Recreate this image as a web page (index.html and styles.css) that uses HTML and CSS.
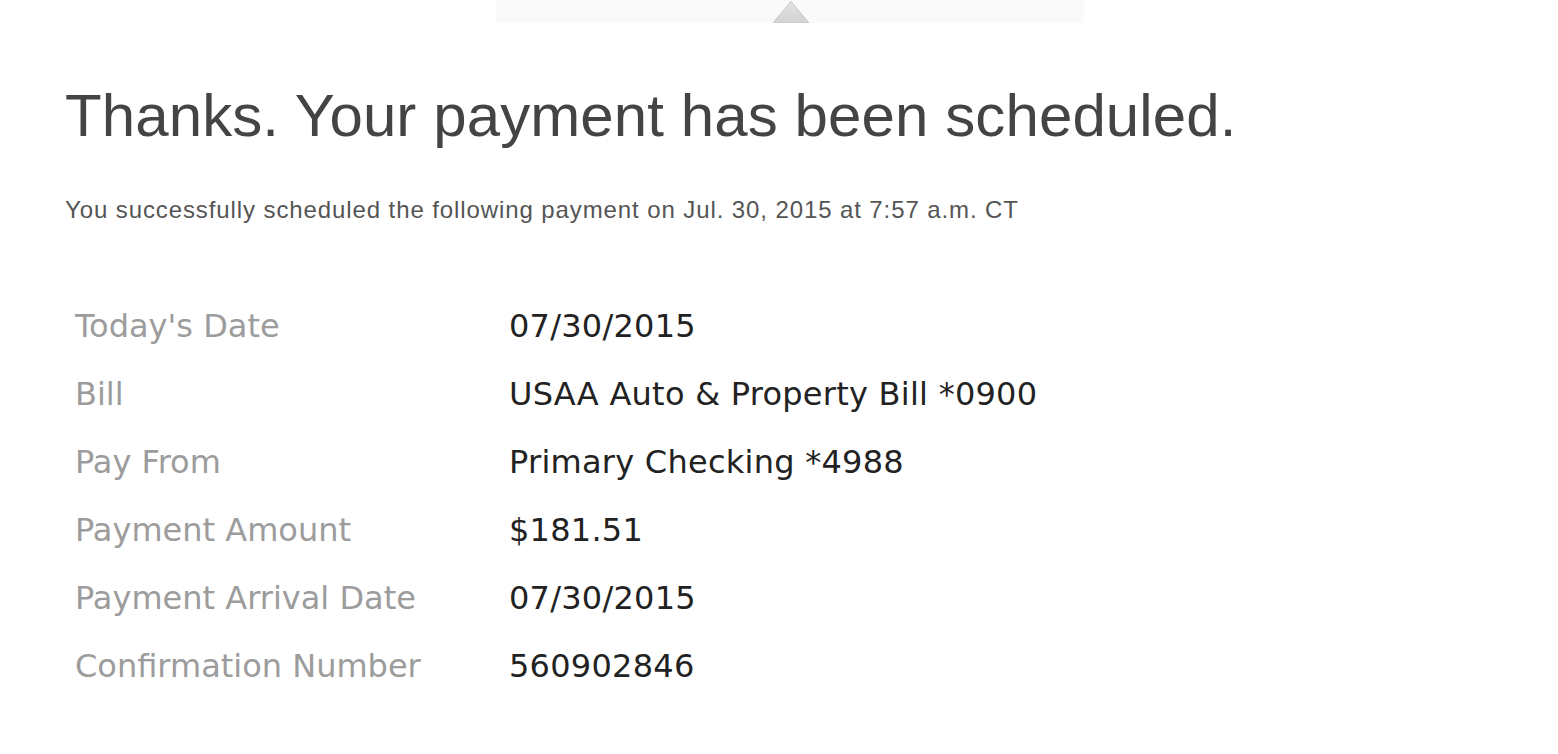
FILE: index.html
```html
<!DOCTYPE html>
<html lang="en">
<head>
<meta charset="utf-8">
<title>Payment Scheduled</title>
<link rel="stylesheet" href="styles.css">
</head>
<body>
<div class="topbar">
  <svg class="caret" width="38" height="23" viewBox="0 0 38 23">
    <defs>
      <linearGradient id="g" x1="0" y1="0" x2="0" y2="1">
        <stop offset="0" stop-color="#e4e4e4"/>
        <stop offset="1" stop-color="#d2d2d2"/>
      </linearGradient>
    </defs>
    <polygon points="19,1.5 37,23 1,23" fill="url(#g)" stroke="#c4c4c4" stroke-width="1"/>
  </svg>
</div>
<main class="content">
  <h1 class="title">Thanks. Your payment has been scheduled.</h1>
  <p class="subtitle">You successfully scheduled the following payment on Jul. 30, 2015 at 7:57 a.m. CT</p>
  <dl class="details">
    <dt>Today's Date</dt><dd>07/30/2015</dd>
    <dt>Bill</dt><dd>USAA Auto &amp; Property Bill *0900</dd>
    <dt>Pay From</dt><dd>Primary Checking *4988</dd>
    <dt>Payment Amount</dt><dd>$181.51</dd>
    <dt>Payment Arrival Date</dt><dd>07/30/2015</dd>
    <dt>Confirmation Number</dt><dd>560902846</dd>
  </dl>
</main>
</body>
</html>
```
FILE: styles.css
```css
html, body {
  margin: 0;
  padding: 0;
  background: #ffffff;
}
.topbar {
  margin-left: 496px;
  width: 588px;
  height: 23px;
  background: #fafafa;
  display: flex;
  justify-content: center;
  align-items: flex-end;
}
.caret {
  display: block;
  margin-left: 1px;
}
.content {
  padding-left: 65px;
}
.title {
  margin: 58px 0 0 0;
  font-family: "Liberation Sans", Arial, sans-serif;
  font-weight: normal;
  font-size: 60px;
  line-height: 70px;
  letter-spacing: 0.1px;
  color: #444444;
}
.subtitle {
  margin: 46px 0 0 0;
  font-family: "Liberation Sans", Arial, sans-serif;
  font-size: 24px;
  line-height: 26px;
  letter-spacing: 0.9px;
  color: #555555;
}
.details {
  margin: 69px 0 0 10px;
  display: grid;
  grid-template-columns: 434px auto;
  font-family: "DejaVu Sans", Verdana, sans-serif;
  font-size: 32px;
  line-height: 68px;
}
.details dt {
  color: #9c9c9c;
}
.details dd {
  margin: 0;
  color: #222222;
  letter-spacing: 0.25px;
}
```
